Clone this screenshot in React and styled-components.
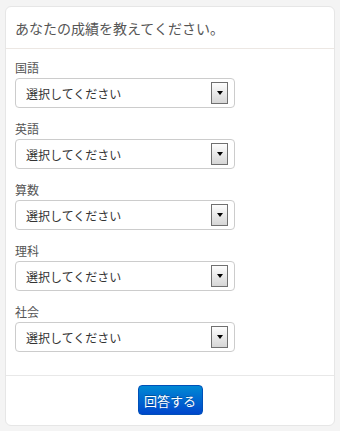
import React from "react";
import styled, { createGlobalStyle } from "styled-components";

const GlobalStyle = createGlobalStyle`
  html, body {
    margin: 0;
    padding: 0;
    background: #f4f4f4;
  }
  body {
    font-family: "Noto Sans CJK JP", "Noto Sans", sans-serif;
  }
`;

const Page = styled.div`
  padding: 6px 5px 6px 5px;
`;

const Card = styled.div`
  background: #fff;
  border: 1px solid #e6e6e6;
  border-radius: 6px;
  display: flex;
  flex-direction: column;
`;

const Header = styled.div`
  height: 41px;
  display: flex;
  align-items: center;
  padding: 0 9px;
  border-bottom: 1px solid #ece7e3;
  color: #555;
  font-size: 14px;
`;

const Body = styled.div`
  padding: 12px 9px 23px;
  display: flex;
  flex-direction: column;
  gap: 14px;
`;

const Group = styled.div`
  display: flex;
  flex-direction: column;
`;

const Label = styled.label`
  font-size: 12px;
  line-height: 14px;
  margin-bottom: 3px;
  color: #555;
`;

const SelectBox = styled.div`
  width: 220px;
  height: 30px;
  box-sizing: border-box;
  border: 1px solid #ccc;
  border-radius: 4px;
  display: flex;
  align-items: center;
  padding: 0 6px 0 10px;
  background: #fff;
`;

const NativeSelect = styled.select`
  appearance: none;
  -webkit-appearance: none;
  border: none;
  outline: none;
  background: transparent;
  flex: 1;
  font-family: inherit;
  font-size: 12px;
  color: #333;
  padding: 0;
`;

const ArrowButton = styled.div`
  width: 17px;
  height: 22px;
  box-sizing: border-box;
  border: 1px solid #707070;
  background: linear-gradient(#fdfdfd, #d6d6d6);
  display: flex;
  align-items: center;
  justify-content: center;
`;

const Triangle = styled.span`
  width: 0;
  height: 0;
  border-left: 3.5px solid transparent;
  border-right: 3.5px solid transparent;
  border-top: 4px solid #000;
`;

const Footer = styled.div`
  border-top: 1px solid #e8e8e8;
  padding: 9px 0 10px;
  display: flex;
  justify-content: center;
`;

const SubmitButton = styled.button`
  width: 65px;
  height: 30px;
  border: 1px solid #0050b8;
  border-radius: 4px;
  background: linear-gradient(#0089d4, #0046cc);
  color: #fff;
  font-family: inherit;
  font-size: 13px;
  padding: 0;
  text-shadow: 0 -1px 0 rgba(0, 0, 0, 0.25);
`;

const subjects = ["国語", "英語", "算数", "理科", "社会"];

const App = () => (
  <Page>
    <GlobalStyle />
    <Card>
      <Header>あなたの成績を教えてください。</Header>
      <Body>
        {subjects.map(name => (
          <Group key={name}>
            <Label>{name}</Label>
            <SelectBox>
              <NativeSelect defaultValue="">
                <option value="">選択してください</option>
              </NativeSelect>
              <ArrowButton>
                <Triangle />
              </ArrowButton>
            </SelectBox>
          </Group>
        ))}
      </Body>
      <Footer>
        <SubmitButton>回答する</SubmitButton>
      </Footer>
    </Card>
  </Page>
);

export default App;
